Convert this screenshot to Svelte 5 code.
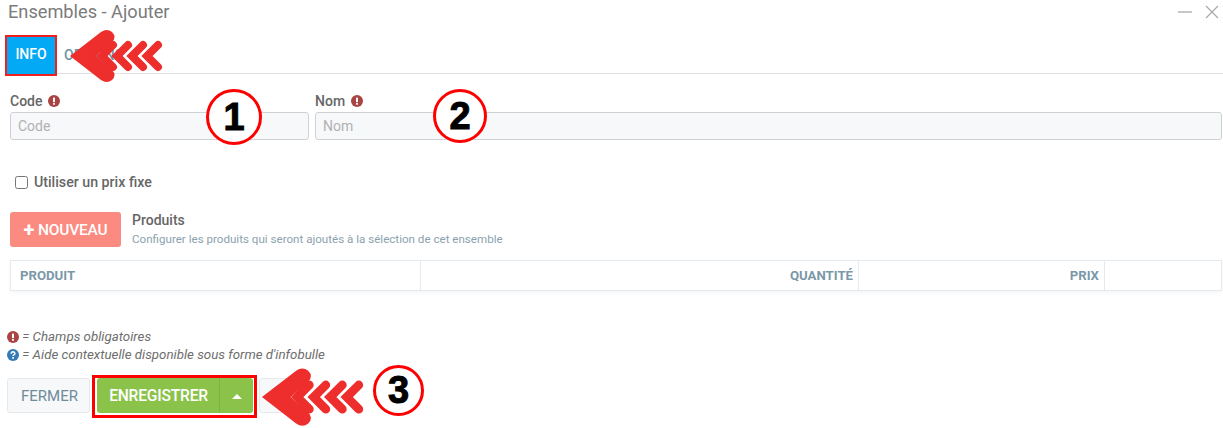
<script>
  const columns = [
    { label: 'PRODUIT', cls: 'col-product' },
    { label: 'QUANTITÉ', cls: 'col-qty' },
    { label: 'PRIX', cls: 'col-price' },
    { label: '', cls: 'col-actions' }
  ];

  // numbered circles put on top of the screenshot
  const badges = [
    { n: 1, x: 206, y: 89, size: 56 },
    { n: 2, x: 433, y: 89, size: 54 },
    { n: 3, x: 373, y: 365, size: 51 }
  ];
</script>

{#snippet arrow(x, y, scale)}
  <svg class="arrow" style="left:{x}px;top:{y}px" width={110 * scale} height={60 * scale} viewBox="0 0 110 60">
    <g fill="none" stroke="#ee2d2d" stroke-width="8" stroke-linecap="round" stroke-linejoin="miter">
      <path d="M98 20 L87 31 L98 42" />
      <path d="M83 20 L72 31 L83 42" />
      <path d="M68 20 L57 31 L68 42" />
      <path d="M53 20 L42 31 L53 42" />
    </g>
    <path d="M10 31 L41 7 Q47 3 52 7 Q57 12 52 17 L36 31 L52 45 Q57 50 52 55 Q47 59 41 55 Z" fill="#ee2d2d" />
  </svg>
{/snippet}

{#snippet alertIcon()}
  <svg class="hint" viewBox="0 0 12 12" width="12" height="12">
    <circle cx="6" cy="6" r="6" fill="#a94442" />
    <rect x="5" y="2.4" width="2" height="4.8" rx="0.6" fill="#fff" />
    <rect x="5" y="8" width="2" height="1.8" rx="0.6" fill="#fff" />
  </svg>
{/snippet}

<div class="page">
  <header class="head">
    <h1>Ensembles - Ajouter</h1>
    <div class="win">
      <svg width="16" height="16" viewBox="0 0 16 16"><path d="M1 8 H15" stroke="#a9a9a9" stroke-width="1.3" /></svg>
      <svg width="16" height="16" viewBox="0 0 16 16"><path d="M2 2 L14 14 M14 2 L2 14" stroke="#a9a9a9" stroke-width="1.2" /></svg>
    </div>
  </header>

  <nav class="tabs">
    <span class="tab active">INFO</span>
    <span class="tab">OPTIONS</span>
  </nav>

  <div class="fields">
    <div class="field code">
      <span class="label">Code {@render alertIcon()}</span>
      <input placeholder="Code" />
    </div>
    <div class="field name">
      <span class="label">Nom {@render alertIcon()}</span>
      <input placeholder="Nom" />
    </div>
  </div>

  <label class="fixed">
    <input type="checkbox" />
    <span>Utiliser un prix fixe</span>
  </label>

  <div class="products">
    <button class="add"><span class="plus">+</span> NOUVEAU</button>
    <div class="products-text">
      <div class="products-title">Produits</div>
      <div class="products-sub">Configurer les produits qui seront ajoutés à la sélection de cet ensemble</div>
    </div>
  </div>

  <div class="table">
    {#each columns as col}
      <div class="th {col.cls}">{col.label}</div>
    {/each}
  </div>

  <div class="legend">
    <div>{@render alertIcon()} = Champs obligatoires</div>
    <div>
      <svg class="hint" viewBox="0 0 12 12" width="12" height="12">
        <circle cx="6" cy="6" r="6" fill="#337ab7" />
        <path d="M4.2 4.7 Q4.3 2.8 6.1 2.8 Q7.9 2.9 7.9 4.4 Q7.9 5.3 6.9 5.8 Q6.1 6.2 6.1 7.1" fill="none" stroke="#fff" stroke-width="1.5" />
        <rect x="5.2" y="8" width="1.8" height="1.7" fill="#fff" />
      </svg>
      = Aide contextuelle disponible sous forme d'infobulle
    </div>
  </div>

  <div class="actions">
    <button class="close">FERMER</button>
    <div class="save-wrap">
      <button class="save">ENREGISTRER</button>
      <button class="caret" aria-label="Plus"><span></span></button>
    </div>
    <button class="ghost" aria-label="Autre"></button>
  </div>

  <!-- annotations drawn over the page -->
  <div class="mark tab-mark"></div>
  <div class="mark save-mark"></div>
  {@render arrow(60, 25, 1)}
  {@render arrow(251, 363, 1.1)}
  {#each badges as b}
    <div class="badge" style="left:{b.x}px;top:{b.y}px;width:{b.size}px;height:{b.size}px;line-height:{b.size - 6}px">{b.n}</div>
  {/each}
</div>

<style>
  :global(body) {
    margin: 0;
    background: #fff;
  }

  .page {
    position: relative;
    width: 1223px;
    height: 428px;
    overflow: hidden;
    font-family: Roboto, sans-serif;
    color: #555;
    box-sizing: border-box;
  }

  .head {
    display: flex;
    justify-content: space-between;
    align-items: center;
    height: 24px;
    padding: 0 3px 0 8px;
  }

  h1 {
    margin: 0;
    font-size: 18.2px;
    font-weight: 400;
    color: #7b7b7b;
    line-height: 24px;
  }

  .win {
    display: flex;
    gap: 11px;
  }

  .tabs {
    display: flex;
    height: 37px;
    margin: 13px 0 0 7px;
    border-bottom: 1px solid #e2e2e2;
    box-sizing: border-box;
    align-items: flex-start;
  }

  .tab {
    display: flex;
    align-items: center;
    height: 36px;
    padding: 0 9px;
    font-size: 14px;
    font-weight: 500;
    color: #6d94a8;
  }

  .tab.active {
    width: 30px;
    height: 34px;
    padding-bottom: 3px;
    justify-content: center;
    background: #03a9f4;
    color: #fff;
  }

  .fields {
    display: flex;
    gap: 6px;
    margin: 18px 1px 0 10px;
  }

  .field {
    display: flex;
    flex-direction: column;
  }

  .field.code {
    width: 299px;
  }

  .field.name {
    flex: 1;
  }

  .label {
    display: flex;
    align-items: center;
    gap: 6px;
    height: 18px;
    font-size: 14px;
    font-weight: 500;
    color: #666;
  }

  .hint {
    flex: none;
    vertical-align: -2px;
  }

  .field input {
    height: 28px;
    margin-top: 2px;
    padding: 0 7px;
    box-sizing: border-box;
    background: #f7f8fa;
    border: 1px solid #cfd2d4;
    border-radius: 3px;
    font: 400 14px Roboto, sans-serif;
  }

  .field input::placeholder {
    color: #b1b1b1;
    opacity: 1;
  }

  .fixed {
    display: flex;
    align-items: center;
    gap: 6px;
    margin: 34px 0 0 15px;
    height: 16px;
    font-size: 14.2px;
    font-weight: 500;
    color: #666;
  }

  .fixed input {
    width: 13px;
    height: 13px;
    margin: 0;
  }

  .products {
    display: flex;
    align-items: flex-start;
    gap: 11px;
    margin: 22px 0 0 10px;
  }

  .add {
    width: 111px;
    height: 35px;
    padding: 0;
    border: 0;
    border-radius: 3px;
    background: #fb8a80;
    color: #fff;
    font: 500 15.5px Roboto, sans-serif;
    letter-spacing: -0.2px;
  }

  .plus {
    font-size: 20px;
    font-weight: 700;
    line-height: 14px;
    vertical-align: -2px;
  }

  .products-title {
    font-size: 14px;
    font-weight: 500;
    color: #666;
    line-height: 17px;
  }

  .products-sub {
    margin-top: 3px;
    font-size: 11.6px;
    color: #8ba2ae;
    line-height: 15px;
  }

  .table {
    display: flex;
    height: 31px;
    margin: 13px 1px 0 10px;
    border: 1px solid #e4ebf0;
    box-sizing: border-box;
    box-shadow: 0 2px 4px rgba(0, 0, 0, 0.04);
  }

  .th {
    display: flex;
    align-items: center;
    padding: 0 5px 0 4px;
    box-sizing: border-box;
    font-size: 13.2px;
    font-weight: 700;
    color: #7a98a9;
    border-right: 1px solid #e4ebf0;
  }

  .col-product {
    width: 410px;
    padding-left: 9px;
  }

  .col-qty {
    width: 438px;
    justify-content: flex-end;
  }

  .col-price {
    width: 246px;
    justify-content: flex-end;
  }

  .col-actions {
    flex: 1;
    border-right: 0;
  }

  .legend {
    margin: 37px 0 0 7px;
    font-size: 13.3px;
    font-style: italic;
    color: #6e6e6e;
    line-height: 18px;
  }

  .actions {
    display: flex;
    align-items: flex-start;
    margin: 14px 0 0 7px;
  }

  .close {
    width: 83px;
    height: 35px;
    padding: 0 0 0 2px;
    background: #f6f8f9;
    border: 1px solid #e6e9eb;
    border-radius: 3px;
    color: #6f8b9c;
    font: 400 15px Roboto, sans-serif;
  }

  .save-wrap {
    display: flex;
    margin-left: 7px;
    height: 35px;
  }

  .save, .caret {
    border: 0;
    padding: 0;
    background: #8bc34a;
    color: #fff;
    font: 500 15.6px Roboto, sans-serif;
    letter-spacing: -0.2px;
  }

  .save {
    width: 123px;
    padding-left: 1px;
    border-radius: 3px 0 0 3px;
    border-right: 1px solid #7cb342;
  }

  .caret {
    width: 33px;
    border-radius: 0 3px 3px 0;
  }

  .caret span {
    display: block;
    width: 0;
    margin: 2px auto 0;
    border: 5px solid transparent;
    border-top: 0;
    border-bottom: 5px solid #fff;
  }

  .ghost {
    width: 30px;
    height: 35px;
    margin-left: 6px;
    background: #f6f8f9;
    border: 1px solid #e6e9eb;
    border-radius: 3px;
  }

  .mark {
    position: absolute;
    border: 2px solid #f01f1f;
    box-sizing: border-box;
  }

  .tab-mark {
    left: 5px;
    top: 35px;
    width: 52px;
    height: 41px;
  }

  .save-mark {
    left: 92px;
    top: 375px;
    width: 165px;
    height: 43px;
    border: 3px solid #f00;
  }

  .arrow {
    position: absolute;
  }

  .badge {
    position: absolute;
    box-sizing: border-box;
    border: 3px solid #f00;
    border-radius: 50%;
    background: #fff;
    color: #000;
    font: 700 38px "Liberation Sans", sans-serif;
    -webkit-text-stroke: 1px #000;
    text-align: center;
  }
</style>
